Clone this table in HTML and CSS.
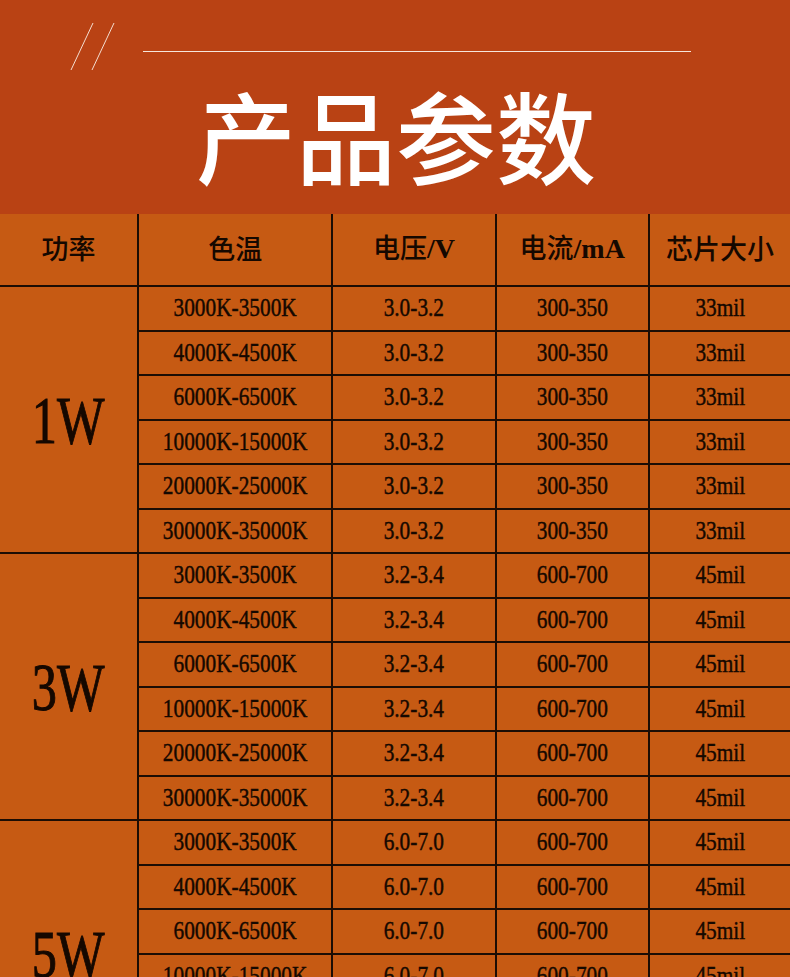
FILE: index.html
```html
<!DOCTYPE html>
<html lang="zh">
<head>
<meta charset="utf-8">
<title>产品参数</title>
<link rel="stylesheet" href="styles.css">
</head>
<body>
<div class="page">
  <header class="banner">
    <svg class="deco" width="790" height="80" viewBox="0 0 790 80">
      <line x1="93" y1="23" x2="71" y2="70" stroke="#f4ddd0" stroke-width="1"/>
      <line x1="114" y1="23" x2="92" y2="70" stroke="#f4ddd0" stroke-width="1"/>
      <line x1="143" y1="51.5" x2="691" y2="51.5" stroke="#f6e6dc" stroke-width="1"/>
    </svg>
    <h1 class="title">产品参数</h1>
  </header>
  <table class="spec">
    <thead>
      <tr class="head">
        <th class="c0">功率</th>
        <th class="c1">色温</th>
        <th class="c2">电压<span class="lat">/V</span></th>
        <th class="c3">电流<span class="lat">/mA</span></th>
        <th class="c4">芯片大小</th>
      </tr>
    </thead>
    <tbody>
      <tr><td class="pw" rowspan="6"><span class="big">1W</span></td><td><span class="n">3000K-3500K</span></td><td><span class="n">3.0-3.2</span></td><td><span class="n">300-350</span></td><td><span class="n">33mil</span></td></tr>
      <tr><td><span class="n">4000K-4500K</span></td><td><span class="n">3.0-3.2</span></td><td><span class="n">300-350</span></td><td><span class="n">33mil</span></td></tr>
      <tr><td><span class="n">6000K-6500K</span></td><td><span class="n">3.0-3.2</span></td><td><span class="n">300-350</span></td><td><span class="n">33mil</span></td></tr>
      <tr><td><span class="n">10000K-15000K</span></td><td><span class="n">3.0-3.2</span></td><td><span class="n">300-350</span></td><td><span class="n">33mil</span></td></tr>
      <tr><td><span class="n">20000K-25000K</span></td><td><span class="n">3.0-3.2</span></td><td><span class="n">300-350</span></td><td><span class="n">33mil</span></td></tr>
      <tr><td><span class="n">30000K-35000K</span></td><td><span class="n">3.0-3.2</span></td><td><span class="n">300-350</span></td><td><span class="n">33mil</span></td></tr>

      <tr><td class="pw" rowspan="6"><span class="big">3W</span></td><td><span class="n">3000K-3500K</span></td><td><span class="n">3.2-3.4</span></td><td><span class="n">600-700</span></td><td><span class="n">45mil</span></td></tr>
      <tr><td><span class="n">4000K-4500K</span></td><td><span class="n">3.2-3.4</span></td><td><span class="n">600-700</span></td><td><span class="n">45mil</span></td></tr>
      <tr><td><span class="n">6000K-6500K</span></td><td><span class="n">3.2-3.4</span></td><td><span class="n">600-700</span></td><td><span class="n">45mil</span></td></tr>
      <tr><td><span class="n">10000K-15000K</span></td><td><span class="n">3.2-3.4</span></td><td><span class="n">600-700</span></td><td><span class="n">45mil</span></td></tr>
      <tr><td><span class="n">20000K-25000K</span></td><td><span class="n">3.2-3.4</span></td><td><span class="n">600-700</span></td><td><span class="n">45mil</span></td></tr>
      <tr><td><span class="n">30000K-35000K</span></td><td><span class="n">3.2-3.4</span></td><td><span class="n">600-700</span></td><td><span class="n">45mil</span></td></tr>

      <tr><td class="pw" rowspan="6"><span class="big">5W</span></td><td><span class="n">3000K-3500K</span></td><td><span class="n">6.0-7.0</span></td><td><span class="n">600-700</span></td><td><span class="n">45mil</span></td></tr>
      <tr><td><span class="n">4000K-4500K</span></td><td><span class="n">6.0-7.0</span></td><td><span class="n">600-700</span></td><td><span class="n">45mil</span></td></tr>
      <tr><td><span class="n">6000K-6500K</span></td><td><span class="n">6.0-7.0</span></td><td><span class="n">600-700</span></td><td><span class="n">45mil</span></td></tr>
      <tr><td><span class="n">10000K-15000K</span></td><td><span class="n">6.0-7.0</span></td><td><span class="n">600-700</span></td><td><span class="n">45mil</span></td></tr>
      <tr><td><span class="n">20000K-25000K</span></td><td><span class="n">6.0-7.0</span></td><td><span class="n">600-700</span></td><td><span class="n">45mil</span></td></tr>
      <tr><td><span class="n">30000K-35000K</span></td><td><span class="n">6.0-7.0</span></td><td><span class="n">600-700</span></td><td><span class="n">45mil</span></td></tr>
    </tbody>
  </table>
</div>
</body>
</html>
```

FILE: styles.css
```css
html, body {
  margin: 0;
  padding: 0;
  background: #c65a13;
}
.page {
  width: 790px;
  overflow: hidden;
}
.banner {
  position: relative;
  height: 214px;
  background: #b94214;
  display: flex;
  justify-content: center;
}
.deco {
  position: absolute;
  left: 0;
  top: 0;
}
.title {
  margin: 82px 0 0 0;
  padding-left: 2px;
  font-family: "Noto Sans CJK SC", sans-serif;
  font-weight: 500;
  font-size: 100px;
  line-height: 104px;
  height: 104px;
  color: #ffffff;
  letter-spacing: 0;
}
.spec {
  width: 790px;
  table-layout: fixed;
  border-collapse: collapse;
  border-style: hidden;
  background: #c65a13;
  color: #150800;
}
.spec th, .spec td {
  border: 2px solid #1c0d04;
  padding: 0;
  text-align: center;
  vertical-align: middle;
}
.c0 { width: 137px; }
.c1 { width: 192px; }
.c2 { width: 161px; }
.c3 { width: 151px; }
.c4 { width: 140px; }
.head {
  height: 72px;
}
.head th {
  font-family: "Noto Sans CJK SC", sans-serif;
  font-weight: 500;
  font-size: 27px;
  line-height: 30px;
  padding-top: 0;
  padding-bottom: 4px;
}
.lat {
  font-family: "Liberation Serif", serif;
  font-weight: 700;
  font-size: 28px;
}
.spec tbody tr {
  height: 44.5px;
}
.n {
  display: inline-block;
  font-family: "Liberation Serif", serif;
  font-size: 26px;
  line-height: 30px;
  transform: scaleX(0.82);
  white-space: nowrap;
  -webkit-text-stroke: 0.45px #150800;
}
.pw {
  vertical-align: middle;
}
.big {
  display: inline-block;
  font-family: "Liberation Serif", serif;
  font-size: 68px;
  line-height: 70px;
  transform: scaleX(0.74);
  white-space: nowrap;
  -webkit-text-stroke: 1px #150800;
}
```
